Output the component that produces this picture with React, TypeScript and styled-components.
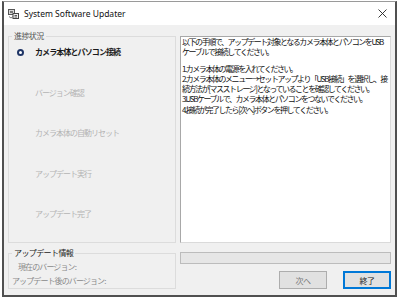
import styled, { createGlobalStyle } from "styled-components";

const GlobalStyle = createGlobalStyle`
  html, body {
    margin: 0;
    padding: 0;
    background: #ffffff;
  }
  body {
    font-family: "Noto Sans CJK JP", "Noto Sans", sans-serif;
  }
`;

const Window = styled.div`
  box-sizing: border-box;
  width: 395px;
  height: 296px;
  margin: 1px 0 0 2px;
  border: 2px solid #505050;
  border-top: 1px solid #9a9a9a;
  display: flex;
  flex-direction: column;
  background: #f0f0f0;
`;

const TitleBar = styled.div`
  height: 23px;
  background: #ffffff;
  display: flex;
  align-items: center;
  padding: 0 0 0 4px;
  flex-shrink: 0;
`;

const Title = styled.span`
  font-family: "Noto Sans", "Open Sans", sans-serif;
  font-size: 8.5px;
  color: #111;
  margin-left: 5px;
  flex: 1;
`;

const CloseBtn = styled.div`
  width: 24px;
  display: flex;
  justify-content: center;
  margin-right: 1px;
`;

const Body = styled.div`
  display: grid;
  grid-template-columns: 168px 211px;
  grid-template-rows: 212px 46px;
  column-gap: 4px;
  padding: 6px 0 0 4px;
`;

const Group = styled.fieldset<{ $top?: number }>`
  margin: ${(p) => p.$top ?? 0}px 0 0 0;
  padding: 0;
  border: 1px solid #dcdcdc;
  min-width: 0;
  box-sizing: border-box;
`;

const Legend = styled.legend<{ $dark?: boolean }>`
  font-size: 8px;
  line-height: 10px;
  letter-spacing: -0.6px;
  color: ${(p) => (p.$dark ? "#222" : "#555")};
  padding: 0 2px;
  margin-left: 3px;
`;

const StepList = styled.div`
  display: flex;
  flex-direction: column;
  gap: 30.5px;
  padding: 6px 0 0 8px;
`;

const Step = styled.div<{ $active?: boolean }>`
  display: flex;
  align-items: center;
  gap: 11px;
  height: 10px;
  font-size: 8px;
  line-height: 10px;
  letter-spacing: ${(p) => (p.$active ? "-0.9px" : "-1px")};
  font-weight: ${(p) => (p.$active ? 700 : 400)};
  color: ${(p) => (p.$active ? "#1a1a1a" : "#b4b4b4")};
  white-space: nowrap;
`;

const Bullet = styled.span<{ $on?: boolean }>`
  box-sizing: border-box;
  width: 7px;
  height: 7px;
  border-radius: 50%;
  flex-shrink: 0;
  background: ${(p) => (p.$on ? "#ffffff" : "transparent")};
  border: ${(p) => (p.$on ? "2.3px solid #1f3566" : "none")};
`;

const TextBox = styled.div`
  box-sizing: border-box;
  margin-top: 5px;
  height: 207px;
  background: #ffffff;
  border: 1px solid #a8a8a8;
  border-right-color: #dadada;
  border-bottom-color: #dadada;
  padding: 0 0 0 1px;
  font-size: 8px;
  line-height: 10.3px;
  letter-spacing: -1.45px;
  color: #111;
  overflow: hidden;
`;

const Line = styled.div<{ $blank?: boolean }>`
  white-space: nowrap;
  height: ${(p) => (p.$blank ? "6px" : "auto")};
`;

const InfoRows = styled.div`
  display: flex;
  flex-direction: column;
  gap: 4px;
  padding: 4px 0 0 0;
`;

const InfoRow = styled.div<{ $indent: number }>`
  font-size: 8px;
  line-height: 10px;
  letter-spacing: -0.9px;
  color: #8a8a8a;
  padding-left: ${(p) => p.$indent}px;
  white-space: nowrap;
`;

const Controls = styled.div`
  display: flex;
  flex-direction: column;
  padding-top: 9px;
`;

const Progress = styled.div`
  box-sizing: border-box;
  height: 13px;
  background: #e6e6e6;
  border: 1px solid #bcbcbc;
`;

const Buttons = styled.div`
  display: flex;
  justify-content: flex-end;
  gap: 16px;
  margin-top: 7px;
`;

const Button = styled.button<{ $default?: boolean }>`
  box-sizing: border-box;
  width: 48px;
  height: 18px;
  padding: 0;
  background: #e1e1e1;
  border: ${(p) => (p.$default ? "2px solid #0078d7" : "1px solid #adadad")};
  font-family: "Noto Sans CJK JP", sans-serif;
  font-size: 8px;
  letter-spacing: -0.5px;
  color: ${(p) => (p.$default ? "#222" : "#777")};
`;

const AppIcon = () => (
  <svg width="11" height="10" viewBox="0 0 11 10">
    <rect x="0.5" y="0.5" width="6" height="5" fill="#d8d8d8" stroke="#555" />
    <rect x="2" y="2" width="3" height="2" fill="#777" />
    <rect x="5" y="4.5" width="5.5" height="5" fill="#eee" stroke="#444" />
    <path d="M6.5 6.5h2.5M6.5 8h2.5" stroke="#333" strokeWidth="0.8" />
    <path d="M1 7.5l2 1.5 2-1.5" stroke="#555" fill="none" strokeWidth="0.8" />
  </svg>
);

const CloseIcon = () => (
  <svg width="9" height="9" viewBox="0 0 9 9">
    <path d="M0.5 0.5l8 8M8.5 0.5l-8 8" stroke="#222" strokeWidth="0.9" />
  </svg>
);

const steps = [
  "カメラ本体とパソコン接続",
  "バージョン確認",
  "カメラ本体の自動リセット",
  "アップデート実行",
  "アップデート完了",
];

const lines = [
  "以下の手順で、アップデート対象となるカメラ本体とパソコンをUSB",
  "ケーブルで接続してください。",
  "",
  "1.カメラ本体の電源を入れてください。",
  "2.カメラ本体のメニュー→セットアップより「USB接続」を選択し、接",
  "続方法が[マスストレージ]となっていることを確認してください。",
  "3.USBケーブルで、カメラ本体とパソコンをつないでください。",
  "4.接続が完了したら[次へ]ボタンを押してください。",
];

export default function App() {
  const current = 0;
  return (
    <>
      <GlobalStyle />
      <Window>
        <TitleBar>
          <AppIcon />
          <Title>System Software Updater</Title>
          <CloseBtn>
            <CloseIcon />
          </CloseBtn>
        </TitleBar>
        <Body>
          <Group>
            <Legend>進捗状況</Legend>
            <StepList>
              {steps.map((s, i) => (
                <Step key={s} $active={i === current}>
                  <Bullet $on={i === current} />
                  {s}
                </Step>
              ))}
            </StepList>
          </Group>
          <TextBox>
            {lines.map((l, i) => (
              <Line key={i} $blank={l === ""}>
                {l}
              </Line>
            ))}
          </TextBox>
          <Group $top={5}>
            <Legend $dark>アップデート情報</Legend>
            <InfoRows>
              <InfoRow $indent={9}>現在のバージョン:</InfoRow>
              <InfoRow $indent={3}>アップデート後のバージョン:</InfoRow>
            </InfoRows>
          </Group>
          <Controls>
            <Progress />
            <Buttons>
              <Button>次へ</Button>
              <Button $default>終了</Button>
            </Buttons>
          </Controls>
        </Body>
      </Window>
    </>
  );
}
